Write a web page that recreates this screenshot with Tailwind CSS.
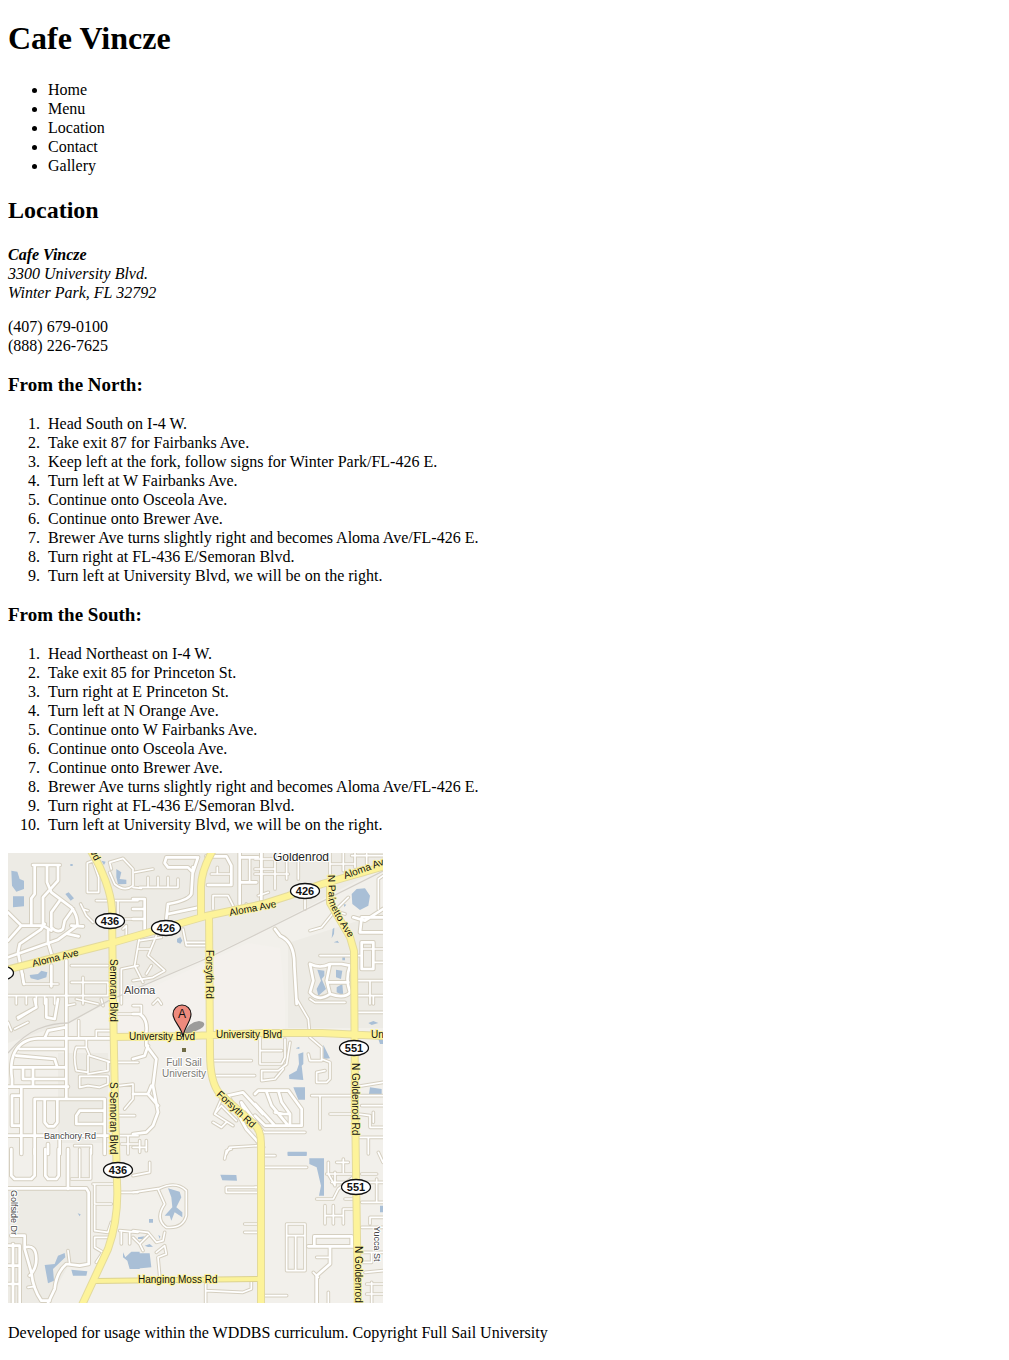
<!DOCTYPE html>
<html lang="en">
<head>
<meta charset="utf-8">
<title>Cafe Vincze</title>
<script src="https://cdn.jsdelivr.net/npm/@tailwindcss/browser@4"></script>
</head>
<body class="bg-white p-2 font-['Liberation_Serif',serif] text-base leading-[19px] text-black">
<header>
  <h1 class="mt-3 text-[32px] leading-[37px] font-bold">Cafe Vincze</h1>
  <nav class="mt-[23px]">
    <ul class="list-disc pl-10">
      <li>Home</li>
      <li>Menu</li>
      <li>Location</li>
      <li>Contact</li>
      <li>Gallery</li>
    </ul>
  </nav>
</header>
<main>
  <h2 class="mt-[21px] text-2xl leading-[28px] font-bold">Location</h2>
  <address class="mt-[21px] italic"><strong>Cafe Vincze</strong><br>3300 University Blvd.<br>Winter Park, FL 32792</address>
  <p class="mt-[15px]">(407) 679-0100<br>(888) 226-7625</p>
  <h3 class="mt-[19px] text-[19px] leading-[22px] font-bold">From the North:</h3>
  <ol class="mt-[18px] list-decimal pl-9">
    <li class="pl-1">Head South on I-4 W.</li>
    <li class="pl-1">Take exit 87 for Fairbanks Ave.</li>
    <li class="pl-1">Keep left at the fork, follow signs for Winter Park/FL-426 E.</li>
    <li class="pl-1">Turn left at W Fairbanks Ave.</li>
    <li class="pl-1">Continue onto Osceola Ave.</li>
    <li class="pl-1">Continue onto Brewer Ave.</li>
    <li class="pl-1">Brewer Ave turns slightly right and becomes Aloma Ave/FL-426 E.</li>
    <li class="pl-1">Turn right at FL-436 E/Semoran Blvd.</li>
    <li class="pl-1">Turn left at University Blvd, we will be on the right.</li>
  </ol>
  <h3 class="mt-[19px] text-[19px] leading-[22px] font-bold">From the South:</h3>
  <ol class="mt-[18px] list-decimal pl-9">
    <li class="pl-1">Head Northeast on I-4 W.</li>
    <li class="pl-1">Take exit 85 for Princeton St.</li>
    <li class="pl-1">Turn right at E Princeton St.</li>
    <li class="pl-1">Turn left at N Orange Ave.</li>
    <li class="pl-1">Continue onto W Fairbanks Ave.</li>
    <li class="pl-1">Continue onto Osceola Ave.</li>
    <li class="pl-1">Continue onto Brewer Ave.</li>
    <li class="pl-1">Brewer Ave turns slightly right and becomes Aloma Ave/FL-426 E.</li>
    <li class="pl-1">Turn right at FL-436 E/Semoran Blvd.</li>
    <li class="pl-1">Turn left at University Blvd, we will be on the right.</li>
  </ol>
  <svg class="mt-[19px] block h-[450px] w-[375px] overflow-hidden font-['Liberation_Sans',sans-serif]" viewBox="0 0 375 450" role="img" aria-label="Map to Cafe Vincze">
    <defs>
      <!-- wide residential streets, drawn tile by tile at three units per pixel -->
      <g id="streets">
        <path transform="translate(0 -12)" d="M75 48H155M80 48V135L70 148V228M117 50V100L130 130L190 175Q210 200 208 230L150 272L0 325M150 50V95L105 145V225M0 190L40 230H105L130 245M40 230L0 275M110 225L98 242L35 285L30 310L48 405M155 155L130 190V235Q150 255 165 240L170 215L195 180M120 245V280L132 320M130 350V412M175 335V465M190 230L225 232M180 255L212 262"/>
        <path transform="translate(375 -12)" d="M190 25H100L95 42L105 55H165L180 70L195 25M180 55L175 135Q165 155 105 165L100 210M105 195L200 175M220 22H280L295 50V108H225M320 12V165M385 12V165M320 25H375M320 100H370M0 150H35V240M0 180H30M0 210H30"/>
        <path transform="translate(741 -12)" d="M384 180L330 215L295 205M384 205H320L315 250H384M320 280H355V360H320V280M165 345Q195 360 225 345L260 345L285 350Q270 390 285 430Q270 450 225 435Q190 460 165 430L175 395L165 345M225 345L215 395L225 435M220 400H280M60 240L75 260Q120 280 118 350L125 465"/>
        <path transform="translate(0 438)" d="M175 0V300M310 118H90Q40 120 20 160Q5 190 12 240V263M35 150H172M25 170L140 180L148 205H12M12 205H172M45 205V240H172M75 205V260M0 263H180M40 263V465M12 380V290H40M12 380H40M80 465V300H290V465M110 300V370L120 382H138L148 370V300M285 335H215L205 350V375H285M0 410H300M110 118L120 95L172 85M80 0L85 25L30 55M115 0V55L140 60L150 0M120 435V465M155 410V465"/>
        <path transform="translate(375 438)" d="M0 45H20Q45 60 40 100V140L70 180L60 260L75 340L60 380L40 400L0 405M0 180L35 170L45 140M0 285H45L55 260M45 285L75 320M390 445L340 390L285 290L330 280L390 345M345 375L325 310L390 400"/>
        <path transform="translate(741 438)" d="M0 285L10 275H100L140 330V380H30L0 350M35 280L50 320L100 380M70 275L80 310L105 345V375M60 340L85 345H105M0 315L60 380"/>
        <path transform="translate(0 888)" d="M10 0V80L20 90H70L80 80V0M112 0V80L120 90H145L152 80V0M180 0V120M0 118H235L242 130V345L215 350L175 345Q145 370 140 420L120 462M10 260H50V300L70 370Q75 420 100 455H125M50 295Q85 285 85 330Q85 360 65 380M0 290H35V462M15 285V462M0 350H35M0 405H35"/>
        <path transform="translate(741 888)" d="M160 292H300M178 290V262H290V292M225 292V345L185 380V462"/>
      </g>
      <!-- narrow lanes and cul-de-sacs -->
      <g id="lanes">
        <path transform="translate(0 -12)" d="M238 130V42L255 35L272 85V130H238M265 155H390M330 155V210H390M218 165L235 200L255 220M240 185L225 180M310 60L305 40L345 28L375 60V110Q350 130 320 105L305 70M345 240L355 230V270M190 350H300M225 385V465M190 400H300V440H190M340 465V360L390 350M50 405H150M45 400V375M0 440H210M25 440V465M55 440V465M85 440V465M110 440V465M140 440V465"/>
        <path transform="translate(375 -12)" d="M5 70L60 60M20 115H135V90M45 115V85M75 115V85M105 115V85M0 115L25 118M235 75H290M253 75V55M240 180V140H285L300 170M150 240L160 290H220M160 280H220M20 260L5 350L30 400M70 260L45 320L95 365L60 385L0 395M15 300H50M55 350L40 375M60 465L75 450L85 465M85 265L20 275M350 25V95M340 165L330 190"/>
        <path transform="translate(741 -12)" d="M20 12V130M60 12V120M95 12V90M130 12V90M0 30H130M0 75H100M0 60H60M40 130L10 140M150 135V180M165 245L200 235L240 185L280 145M240 185L270 195M195 320H320M225 12V75M265 12V65M225 45H300M300 12V55M335 12V45M320 300H384M345 395V465M310 395H384M310 440H384M355 440V465M370 180V90L384 80M355 340H384M290 20H384"/>
        <path transform="translate(0 438)" d="M212 65V112M265 112V95H310M205 145H235V120M235 145L245 170L310 190H390M205 145Q195 170 205 215L240 220V170M300 190V215L240 225M215 232H300V255L275 265L240 260L215 265V232M0 70L10 95M20 90L60 70M175 20L200 15M205 0L270 15M280 0L285 20M330 45H390M335 260L375 255V300L350 330M335 350H380M330 410H390M200 440H250V465M340 435H390M360 410V465M70 35L30 60"/>
        <path transform="translate(375 438)" d="M240 185H355M240 230H365M240 370L265 385M245 345L300 380M265 385L280 370M245 345L265 320L310 365M265 300L245 345M280 465L290 445L375 440M0 445H40M20 425V460M40 425V455M0 20H25V45"/>
        <path transform="translate(741 438)" d="M125 0L160 60L165 115L200 145V185H165L160 165M200 180L225 190V240L215 250H185V220L210 215M15 115V195H80L90 175V120M15 155H80M20 215H70L95 195L105 130M20 215V245L60 240L85 210M165 0L180 10H270M170 290H384M195 290V390M225 345H300M20 400H150M310 40H384M310 262L384 250M320 320H384M310 345L345 350V385H384M355 340V370M310 415H384M340 415V465"/>
        <path transform="translate(0 888)" d="M215 0V85M248 0V90H190M255 105H315M260 105V165H310M260 170V245L300 250L310 220M260 265H300M260 265V295L285 310L265 340M335 245L390 250M340 130H390M185 345L180 305M60 415L80 412M340 285V250M365 250V285"/>
        <path transform="translate(375 888)" d="M0 80L50 70V40M0 130L80 118Q130 95 160 125V200Q150 240 100 235Q65 210 95 165L75 120M275 30L280 5L295 0M380 115H280V130H380M335 225H380M335 250H380M0 245L45 250L70 280L90 275L95 250M0 265L20 285L45 260M20 285L30 305M70 310L95 290L100 315L75 325L80 380M218 400V462M218 425L330 430L355 420V395"/>
        <path transform="translate(741 888)" d="M20 55H155M25 20H60M0 115H15M95 225H150V365H95V225M95 260H150M122 260V365M30 440H95M220 430V462M185 325H220M185 150H235L250 120L300 80M220 40V75L240 110M245 40H280M265 30V70M215 75H295M230 100H300M240 70V110M270 150H300M210 170V225M235 170V225M265 225V180H300M210 200H265M320 75H365M320 100H384M365 90V160M320 160H384M345 225V205H384M320 235H384M315 340H350V310M320 310H384M330 370L384 365M335 405H384M335 435H384M350 400V462M370 10L384 40M175 370L190 385"/>
      </g>
      <!-- yellow main roads -->
      <g id="mains" fill="none">
        <path d="M83 -2C95 17 103 40 104 56L105 148L107 250L109 330Q111 365 100 396L74 452M-2 117L100 91L198 63L255 51L280 43L314 31L377 13M205 -3Q193 18 193 34V64M201 62L202 200Q202 230 212 241L246 271Q253 277 253 290V452M106 184L182 183L255 180L314 180L377 183M322 26L322 50L342 84L346 98L347 250L350 452"/>
      </g>
      <path id="palmetto" d="M320 22L321 49Q325 62 345 91"/>
    </defs>

    <rect width="375" height="450" fill="#f2f0eb"/>
    <path fill="#edebe5" d="M0 0H375V14L250 80L185 110L100 150L60 170L0 190ZM280 90L375 60V175H280ZM0 335H80V411L60 413L40 450H0ZM50 200H100V290H50Z"/>
    <path fill="#f4f1ed" d="M110 150L240 90L272 95L277 150V178H110Z"/>

    <g fill="#a9bfd6">
      <g transform="scale(.33333)">
        <path transform="translate(0 -12)" d="M10 65L28 68L35 90L48 95V120L25 128L12 110ZM15 142H48V172L15 175ZM172 135L182 130L198 148L188 155ZM65 378L90 375L100 365L118 370L115 385L90 393L68 388ZM325 60L340 70L335 90L355 92L355 105L330 106L325 85ZM280 35L293 38L288 48ZM187 45H194V51H187Z"/>
        <path transform="translate(375 -12)" d="M132 270L142 264L148 275L142 284L132 280Z"/>
        <path transform="translate(741 -12)" d="M290 135L305 120L330 118L345 140L340 170L315 183L292 165ZM233 240L238 236L237 255L230 268ZM236 280L248 275L252 282ZM262 325H270V334H262ZM187 362L208 365V380L200 390L213 420L190 440L185 420L198 395ZM243 362L262 365L258 390L243 385ZM245 415L262 405L265 440L245 430ZM266 165L274 167L268 174Z"/>
        <path transform="translate(741 438)" d="M130 165L145 160V195L140 200L145 243L103 240L102 228L125 215L132 195ZM115 265H150V302H130ZM205 137L225 178L205 180ZM340 72L355 66L370 72L350 78ZM345 265L380 270V285H342ZM98 460H155V471H98ZM370 120H384V135H375ZM122 148L133 143V150Z"/>
        <path transform="translate(0 888)" d="M110 348L140 345L150 320L170 312L172 325L135 360L138 395L120 403ZM190 362L238 367L235 380H195ZM209 193L218 196L215 202ZM345 310L352 325L370 308H395V360H365L358 335L345 325Z"/>
        <path transform="translate(375 888)" d="M105 118L140 128L145 145L130 175L148 190V205L125 190L115 215L110 200L95 200L118 175L115 145ZM262 77L310 78L312 95L268 94ZM48 210H60V221H48ZM0 313H50L55 355L0 360ZM15 265L35 262L30 270L15 270ZM35 290L50 285L60 293L45 294ZM76 258L82 262L80 270Z"/>
        <path transform="translate(741 888)" d="M163 28H207V140H192L198 110L185 55L163 45ZM375 170H384V190H375ZM98 8H155V17H98Z"/>
      </g>
    </g>

    <g transform="scale(.33333)" fill="none" stroke-linejoin="round" stroke-linecap="round">
      <use href="#streets" stroke="#d5cfc0" stroke-width="14"/>
      <use href="#lanes" stroke="#d5cfc0" stroke-width="11"/>
      <use href="#streets" stroke="#fff" stroke-width="8"/>
      <use href="#lanes" stroke="#fff" stroke-width="5"/>
    </g>
    <path fill="none" stroke="#d3cfc8" stroke-width="1.3" d="M0 200Q15 182 30 176T60 170L100 148L125 137L202 104L247 82L375 18"/>

    <g fill="none" stroke-linejoin="round">
      <path d="M87 428L252 426" stroke="#ddd38f" stroke-width="6"/>
      <use href="#mains" stroke="#e3da9c" stroke-width="8"/>
      <path d="M87 428L252 426" stroke="#fbf29a" stroke-width="4"/>
      <use href="#mains" stroke="#fdf39a" stroke-width="6"/>
    </g>

    <path fill="#555" fill-opacity=".55" d="M176 181Q180 169 191 168Q199 169 195 174Q189 179 176 181Z"/>
    <g font-size="10" fill="#111" stroke="#fbf29a" stroke-width="2" paint-order="stroke" stroke-linejoin="round">
      <text transform="translate(25 114) rotate(-14)">Aloma Ave</text>
      <text transform="translate(222 63) rotate(-11)">Aloma Ave</text>
      <text transform="translate(337 26) rotate(-20)">Aloma Ave</text>
      <text transform="translate(82 -1) rotate(62)">vd</text>
      <text transform="translate(102 106) rotate(90)">Semoran Blvd</text>
      <text transform="translate(102 229) rotate(90)">S Semoran Blvd</text>
      <text transform="translate(198 97) rotate(90)">Forsyth Rd</text>
      <text transform="translate(208 242) rotate(43)">Forsyth Rd</text>
      <text transform="translate(344 210) rotate(90)">N Goldenrod Rd</text>
      <text transform="translate(347 393) rotate(90)">N Goldenrod</text>
      <text><textPath href="#palmetto">N Palmetto Ave</textPath></text>
      <text x="121" y="187">University Blvd</text>
      <text x="208" y="185">University Blvd</text>
      <text x="363" y="185">Un</text>
      <text x="130" y="430">Hanging Moss Rd</text>
    </g>
    <g fill="#444" stroke="#fff" stroke-width="2" paint-order="stroke" stroke-linejoin="round">
      <text x="265" y="8" font-size="12" fill="#222">Goldenrod</text>
      <text x="116" y="141" font-size="11">Aloma</text>
      <text x="36" y="286" font-size="9">Banchory Rd</text>
      <text transform="translate(3 337) rotate(90)" font-size="9">Golfside Dr</text>
      <text transform="translate(366 373) rotate(90)" font-size="9">Yucca St</text>
      <g font-size="10" fill="#7b7a72" text-anchor="middle">
        <text x="176" y="213">Full Sail</text>
        <text x="176" y="224">University</text>
      </g>
    </g>
    <rect x="174" y="195" width="4" height="4" fill="#6f6b45"/>

    <g fill="#fff" stroke="#111" stroke-width="1.3">
      <ellipse cx="102" cy="68" rx="14.5" ry="7.5"/>
      <ellipse cx="158" cy="75" rx="14.5" ry="7.5"/>
      <ellipse cx="297" cy="38" rx="14.5" ry="7.5"/>
      <ellipse cx="346" cy="195" rx="14.5" ry="7.5"/>
      <ellipse cx="110" cy="317" rx="14.5" ry="7.5"/>
      <ellipse cx="348" cy="334" rx="14.5" ry="7.5"/>
      <ellipse cx="-9" cy="120" rx="14.5" ry="7.5"/>
    </g>
    <g font-size="11" font-weight="700" fill="#111" text-anchor="middle">
      <text x="102" y="72">436</text>
      <text x="158" y="79">426</text>
      <text x="297" y="42">426</text>
      <text x="346" y="199">551</text>
      <text x="110" y="321">436</text>
      <text x="348" y="338">551</text>
    </g>

    <path fill="#ee8a7d" stroke="#111" stroke-width="1.1" d="M175 184C174 174 165 169 165 161A9 9 0 0 1 183 161C183 169 176 174 175 184Z"/>
    <text x="174" y="165" font-size="12" fill="#111" text-anchor="middle">A</text>
  </svg>
</main>
<footer class="mt-5 pb-2">
  <p>Developed for usage within the WDDBS curriculum. Copyright Full Sail University</p>
</footer>
</body>
</html>
